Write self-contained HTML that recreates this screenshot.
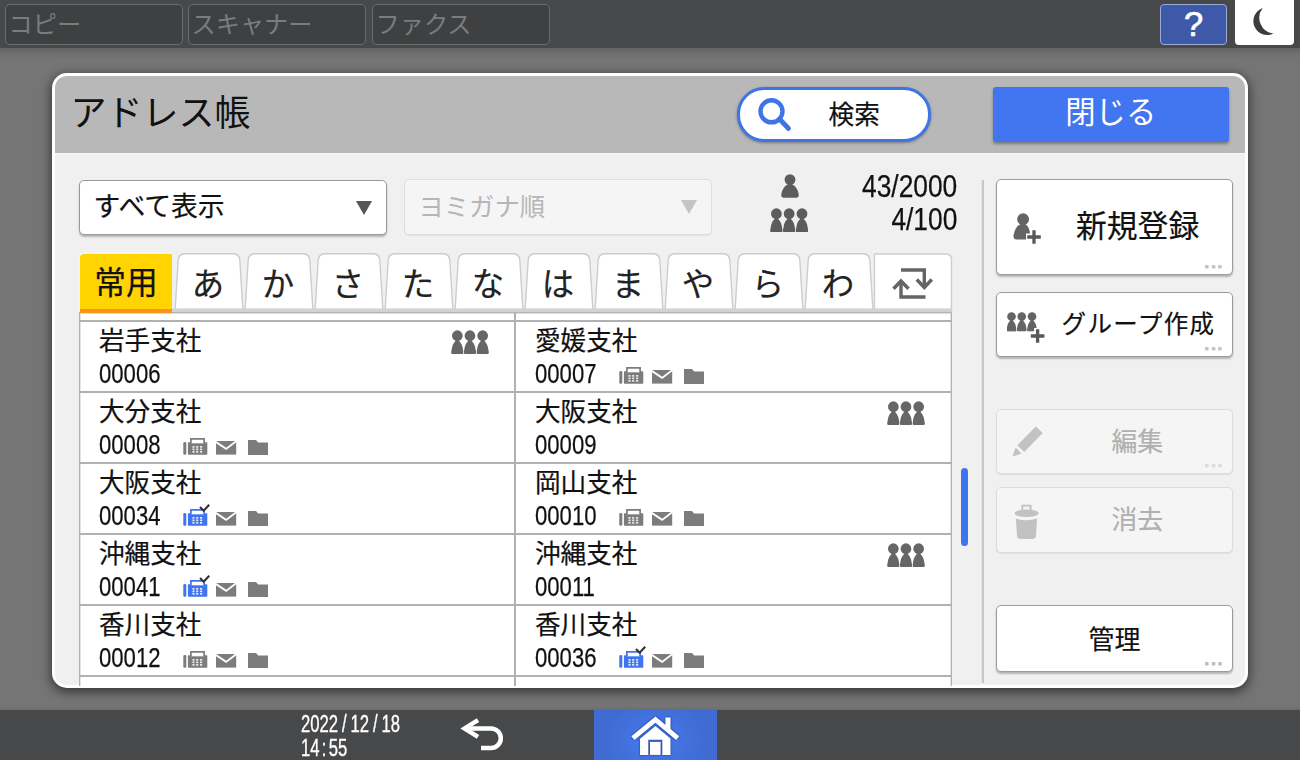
<!DOCTYPE html>
<html lang="ja">
<head>
<meta charset="utf-8">
<title>アドレス帳</title>
<style>
*{box-sizing:border-box;margin:0;padding:0}
html,body{width:1300px;height:760px;overflow:hidden}
body{position:relative;background:#757575;font-family:"Liberation Sans","Noto Sans CJK JP",sans-serif;color:#111}
.abs{position:absolute}
.nar{display:inline-block;transform-origin:0 50%;white-space:nowrap}
/* top bar */
#top{left:0;top:0;width:1300px;height:48px;background:#47484a}
#topsh{left:0;top:48px;width:1300px;height:12px;background:linear-gradient(#646464,#6f6f6f 45%,#757575)}
.tbtn{top:4px;height:41px;width:178px;border:1px solid #6b6c6e;border-radius:5px;background:#3f4042;color:#7b7c7e;font-size:24.2px;line-height:39px;padding-left:2.5px;white-space:nowrap}
#help{left:1160px;top:4px;width:67px;height:41px;background:#3d59a7;border:1.5px solid #9aabd8;border-radius:4px;color:#fff;font-size:34.5px;-webkit-text-stroke:.7px #fff;line-height:39px;text-align:center}
#moon{left:1235px;top:0;width:59px;height:45px;background:#fff;border-radius:0 0 4px 4px}
/* bottom bar */
#botsh{left:0;top:706px;width:1300px;height:4px;background:linear-gradient(#757575,#6c6c6c)}
#bot{left:0;top:710px;width:1300px;height:50px;background:#47484a}
#home{left:594px;top:710px;width:123px;height:50px;background:radial-gradient(ellipse 52px 40px at 50% 60%,#477bf0,#3f6bd2)}
.dt{left:301px;color:#fff;-webkit-text-stroke:.35px #fff;font-size:23px;line-height:24px;white-space:nowrap}
/* panel */
#panel{left:52px;top:73px;width:1196px;height:615px;background:#f0f0f0;border:3px solid #fff;border-radius:15px;box-shadow:0 3px 11px 1px rgba(0,0,0,.55);overflow:hidden}
#phead{left:0;top:0;width:1190px;height:77px;background:#b8b8b8;border-bottom:0;box-shadow:0 1.5px 0 #f6f6f6}
#title{left:70.5px;top:89.5px;font-size:36px;line-height:48px;color:#111;white-space:nowrap}
#search{left:737px;top:87px;width:194px;height:55px;border:3px solid #3f74e8;border-radius:27px;background:#fff;box-shadow:0 1px 3px rgba(0,0,0,.35)}
#search span{font-weight:400;-webkit-text-stroke:.2px #111;position:absolute;left:88.5px;top:6.5px;font-size:25.7px;line-height:36px;white-space:nowrap}
#close{left:992.5px;top:86.5px;width:236.5px;height:55px;background:#4275f0;border-radius:3px;box-shadow:0 2px 3px rgba(0,0,0,.35);color:#fff;font-size:30.3px;line-height:52px;text-align:center}
.dd{top:180px;width:308px;height:55px;border-radius:5px;font-weight:400;-webkit-text-stroke:.2px;font-size:26.8px;line-height:53px;padding-left:13.5px;white-space:nowrap}
#dd1{left:79px;background:#fff;border:1px solid #9a9a9a;box-shadow:0 2px 2px rgba(0,0,0,.25)}
#dd2{left:404px;top:179px;height:56px;background:#f5f5f5;border:1px solid #dedede;box-shadow:0 1px 1px rgba(0,0,0,.06);color:#b6b6b6;font-weight:400;-webkit-text-stroke:0;font-size:25.3px;line-height:54px}
.tri{position:absolute;right:14px;top:20px;width:0;height:0;border-left:8.5px solid transparent;border-right:8.5px solid transparent;border-top:14px solid #555}
#dd2 .tri{border-top-color:#c4c4c4}
.cnt{font-size:30.5px;-webkit-text-stroke:.25px #111;line-height:32px;color:#111;white-space:nowrap;right:342.4px;transform:scaleX(.864);transform-origin:100% 50%}
/* tabs */
.tabt{font-weight:400;-webkit-text-stroke:.2px #222;top:255px;width:68px;height:59px;font-size:32.4px;line-height:61px;text-align:center;color:#222}
#tab0{left:80px;top:254px;width:92px;height:59px;background:#ffd400;border-bottom:4px solid #f7941d;border-radius:4px 0 0 0;box-shadow:-1.5px -1.5px 0 #f6f4fb;font-weight:400;-webkit-text-stroke:.25px #111;font-size:31.7px;line-height:59px;text-indent:0;text-align:center;color:#111}
/* list */
#list{left:79px;top:312px;width:873px;height:374px;background:#fff;border:1px solid #b2b2b2;border-top:1px solid #adadad;border-bottom:none;box-shadow:inset 0 1px 0 #dedede,inset 1px 0 0 #e4e4e4,inset -1px 0 0 #e4e4e4}
.hl{left:80px;width:872px;height:2px;background:#b1b1b1}
#vl{left:514px;top:313px;width:2px;height:373px;background:#b1b1b1}
.nm{font-size:25.6px;font-weight:400;-webkit-text-stroke:.2px #111;line-height:32px;white-space:nowrap;color:#111}
.no{font-size:27.5px;-webkit-text-stroke:.25px #111;line-height:30px;white-space:nowrap;color:#111;transform:scaleX(.805);transform-origin:0 50%}
.ig{fill:#666}
#sb{left:961px;top:468px;width:7px;height:78px;border-radius:4px;background:#3f74f0}
#vsep{left:982px;top:180px;width:2px;height:503px;background:#c7c7c7;box-shadow:-.5px 0 0 #dcdcdc}
/* right buttons */
.rb{left:996px;width:237px;background:#fff;border:1px solid #9c9c9c;border-radius:5px;box-shadow:0 2px 2px rgba(0,0,0,.25);font-size:29px;white-space:nowrap;color:#111}
.rb.dis{background:#f5f5f5;border-color:#dcdcdc;box-shadow:0 1px 1px rgba(0,0,0,.08);color:#b0b0b0}
.rb span{position:absolute;white-space:nowrap;font-weight:400;-webkit-text-stroke:.2px}
.dots{position:absolute;right:9px;bottom:4.9px;width:18px;height:4px}
</style>
</head>
<body>
<div id="top" class="abs"></div>
<div id="topsh" class="abs"></div>
<div class="abs tbtn" style="left:5px">コピー</div>
<div class="abs tbtn" style="left:188px">スキャナー</div>
<div class="abs tbtn" style="left:372px">ファクス</div>
<div id="help" class="abs">?</div>
<div id="moon" class="abs"><svg width="57" height="44" viewBox="0 0 57 44"><path d="M27.7 8 A13.9 13.9 0 1 0 38.6 33.5 A15.84 15.84 0 0 1 27.7 8Z" fill="#3c3c3e"/></svg></div>

<div id="botsh" class="abs"></div>
<div id="bot" class="abs"></div>
<div id="home" class="abs"></div>

<div id="panel" class="abs"><div id="phead" class="abs"></div></div>
<div id="title" class="abs">アドレス帳</div>
<div id="search" class="abs"><span>検索</span></div>
<div id="close" class="abs">閉じる</div>

<div id="dd1" class="abs dd">すべて表示<i class="tri"></i></div>
<div id="dd2" class="abs dd">ヨミガナ順<i class="tri"></i></div>
<div class="abs cnt" style="top:169.5px">43/2000</div>
<div class="abs cnt" style="top:202.5px">4/100</div>

<div id="list" class="abs"></div>
<div id="vl" class="abs"></div>
<div id="sb" class="abs"></div>
<div id="vsep" class="abs"></div>
<!--GEN-->
<svg width="0" height="0" style="position:absolute">
<defs>
<symbol id="i-person" viewBox="0 0 18 24"><circle cx="9" cy="5.6" r="5.4"/><path d="M9 10 C4 10.5 1.2 15 0.3 20.5 Q0 23.8 3 23.8 H15 Q18 23.8 17.7 20.5 C16.8 15 14 10.5 9 10Z"/></symbol>
<symbol id="i-pawn" viewBox="0 0 12.8 24.6"><circle cx="6.4" cy="5.7" r="5.4"/><path d="M5 10 C3.8 12.6 1.9 13.4 1.2 17 L0.2 22.3 Q0 24.4 2 24.4 H10.8 Q12.8 24.4 12.6 22.3 L11.6 17 C10.9 13.4 9 12.6 7.8 10Z"/></symbol>
<symbol id="i-group" viewBox="0 0 38.4 24.6"><use href="#i-pawn" x="0" y="0" width="12.8" height="24.6"/><use href="#i-pawn" x="12.75" y="0" width="12.8" height="24.6"/><use href="#i-pawn" x="25.6" y="0" width="12.8" height="24.6"/></symbol>
<symbol id="i-fax" viewBox="0 0 25 17"><rect x="0.3" y="3.9" width="3" height="12.8" rx="1.3"/><rect x="4.9" y="4.3" width="19.4" height="12.4" rx="0.8"/><path d="M7.9 5.3 V0.9 H21.1 V5.3" fill="#fff" stroke="currentColor" stroke-width="1.7"/><g fill="#fff" opacity=".82"><rect x="9.4" y="8" width="2.2" height="1.7"/><rect x="13.1" y="8" width="2.2" height="1.7"/><rect x="17" y="8" width="2.2" height="1.7"/><rect x="9.4" y="10.5" width="2.2" height="1.7"/><rect x="13.1" y="10.5" width="2.2" height="1.7"/><rect x="17" y="10.5" width="2.2" height="1.7"/><rect x="9.4" y="13" width="2.2" height="1.7"/><rect x="13.1" y="13" width="2.2" height="1.7"/><rect x="17" y="13" width="2.2" height="1.7"/></g></symbol>
<symbol id="i-mail" viewBox="0 0 21 14"><rect x="0" y="0" width="20.2" height="13.6"/><path d="M-0.6 0.6 L10.15 7.9 L20.8 -0.2" fill="none" stroke="#fff" stroke-width="1.9"/></symbol>
<symbol id="i-folder" viewBox="0 0 20 15"><path d="M0 0 H8 L10.2 2.4 H20 V15 H0Z"/></symbol>
<symbol id="i-dots" viewBox="0 0 18 4"><rect x="0" y="0" width="3.6" height="3.6" rx="0.8"/><rect x="6.8" y="0" width="3.6" height="3.6" rx="0.8"/><rect x="13.1" y="0" width="3.6" height="3.6" rx="0.8"/></symbol>
</defs>
</svg>
<svg class="abs" style="left:0;top:0" width="1300" height="330" viewBox="0 0 1300 330">
<path d="M175 311.5 L178.2 260 Q178.8 253.8 185 253.8 H233 Q239.2 253.8 239.8 260 L243 311.5Z" fill="#fff" stroke="#cdcdcd" stroke-width="1.4"/>
<path d="M245 311.5 L248.2 260 Q248.8 253.8 255 253.8 H303 Q309.2 253.8 309.8 260 L313 311.5Z" fill="#fff" stroke="#cdcdcd" stroke-width="1.4"/>
<path d="M315 311.5 L318.2 260 Q318.8 253.8 325 253.8 H373 Q379.2 253.8 379.8 260 L383 311.5Z" fill="#fff" stroke="#cdcdcd" stroke-width="1.4"/>
<path d="M385 311.5 L388.2 260 Q388.8 253.8 395 253.8 H443 Q449.2 253.8 449.8 260 L453 311.5Z" fill="#fff" stroke="#cdcdcd" stroke-width="1.4"/>
<path d="M455 311.5 L458.2 260 Q458.8 253.8 465 253.8 H513 Q519.2 253.8 519.8 260 L523 311.5Z" fill="#fff" stroke="#cdcdcd" stroke-width="1.4"/>
<path d="M525 311.5 L528.2 260 Q528.8 253.8 535 253.8 H583 Q589.2 253.8 589.8 260 L593 311.5Z" fill="#fff" stroke="#cdcdcd" stroke-width="1.4"/>
<path d="M595 311.5 L598.2 260 Q598.8 253.8 605 253.8 H653 Q659.2 253.8 659.8 260 L663 311.5Z" fill="#fff" stroke="#cdcdcd" stroke-width="1.4"/>
<path d="M665 311.5 L668.2 260 Q668.8 253.8 675 253.8 H723 Q729.2 253.8 729.8 260 L733 311.5Z" fill="#fff" stroke="#cdcdcd" stroke-width="1.4"/>
<path d="M735 311.5 L738.2 260 Q738.8 253.8 745 253.8 H793 Q799.2 253.8 799.8 260 L803 311.5Z" fill="#fff" stroke="#cdcdcd" stroke-width="1.4"/>
<path d="M805 311.5 L808.2 260 Q808.8 253.8 815 253.8 H863 Q869.2 253.8 869.8 260 L873 311.5Z" fill="#fff" stroke="#cdcdcd" stroke-width="1.4"/>
<path d="M874.5 311.5 V254 H946 Q951.5 254 951.5 259.5 V311.5Z" fill="#fff" stroke="#cdcdcd" stroke-width="1.4"/>
<rect x="172" y="308.4" width="780" height="3.4" fill="#d3d3d3"/>
<g fill="none" stroke="#646464" stroke-width="3.4" stroke-linejoin="miter"><path d="M901 270 H924.3 V286"/><path d="M916.8 279.5 L924.3 287.5 L931.8 279.5"/><path d="M925.5 297 H901 V283"/><path d="M893.5 288.8 L901 281 L908.5 288.8"/></g>
</svg>
<div class="abs tabt" style="left:174px">あ</div>
<div class="abs tabt" style="left:244px">か</div>
<div class="abs tabt" style="left:314px">さ</div>
<div class="abs tabt" style="left:384px">た</div>
<div class="abs tabt" style="left:454px">な</div>
<div class="abs tabt" style="left:524px">は</div>
<div class="abs tabt" style="left:594px">ま</div>
<div class="abs tabt" style="left:664px">や</div>
<div class="abs tabt" style="left:734px">ら</div>
<div class="abs tabt" style="left:804px">わ</div>
<div id="tab0" class="abs">常用</div>
<div class="abs hl" style="top:320px"></div>
<div class="abs hl" style="top:391px"></div>
<div class="abs hl" style="top:462px"></div>
<div class="abs hl" style="top:533px"></div>
<div class="abs hl" style="top:604px"></div>
<div class="abs hl" style="top:675px"></div>
<div class="abs nm" style="left:99px;top:325px">岩手支社</div>
<div class="abs no" style="left:99.4px;top:358.6px">00006</div>
<svg class="abs ig" style="left:450.6px;top:329.6px" width="38" height="24.4"><use href="#i-group"/></svg>
<div class="abs nm" style="left:99px;top:396px">大分支社</div>
<div class="abs no" style="left:99.4px;top:429.6px">00008</div>
<svg class="abs" style="left:182.5px;top:438px;color:#7c7c7c;fill:#7c7c7c" width="25" height="17"><use href="#i-fax"/></svg>
<svg class="abs" style="left:215.8px;top:441px;fill:#7c7c7c" width="21" height="14"><use href="#i-mail"/></svg>
<svg class="abs" style="left:248px;top:439.8px;fill:#7c7c7c" width="20" height="15"><use href="#i-folder"/></svg>
<div class="abs nm" style="left:99px;top:467px">大阪支社</div>
<div class="abs no" style="left:99.4px;top:500.6px">00034</div>
<svg class="abs" style="left:182.5px;top:509px;color:#3f74f0;fill:#3f74f0" width="25" height="17"><use href="#i-fax"/></svg>
<svg class="abs" style="left:198px;top:502px" width="14" height="10" viewBox="0 0 14 10"><path d="M2 5 L5.7 8.7 L11.2 2.7" fill="none" stroke="#333" stroke-width="2.1"/></svg>
<svg class="abs" style="left:215.8px;top:512px;fill:#7c7c7c" width="21" height="14"><use href="#i-mail"/></svg>
<svg class="abs" style="left:248px;top:510.8px;fill:#7c7c7c" width="20" height="15"><use href="#i-folder"/></svg>
<div class="abs nm" style="left:99px;top:538px">沖縄支社</div>
<div class="abs no" style="left:99.4px;top:571.6px">00041</div>
<svg class="abs" style="left:182.5px;top:580px;color:#3f74f0;fill:#3f74f0" width="25" height="17"><use href="#i-fax"/></svg>
<svg class="abs" style="left:198px;top:573px" width="14" height="10" viewBox="0 0 14 10"><path d="M2 5 L5.7 8.7 L11.2 2.7" fill="none" stroke="#333" stroke-width="2.1"/></svg>
<svg class="abs" style="left:215.8px;top:583px;fill:#7c7c7c" width="21" height="14"><use href="#i-mail"/></svg>
<svg class="abs" style="left:248px;top:581.8px;fill:#7c7c7c" width="20" height="15"><use href="#i-folder"/></svg>
<div class="abs nm" style="left:99px;top:609px">香川支社</div>
<div class="abs no" style="left:99.4px;top:642.6px">00012</div>
<svg class="abs" style="left:182.5px;top:651px;color:#7c7c7c;fill:#7c7c7c" width="25" height="17"><use href="#i-fax"/></svg>
<svg class="abs" style="left:215.8px;top:654px;fill:#7c7c7c" width="21" height="14"><use href="#i-mail"/></svg>
<svg class="abs" style="left:248px;top:652.8px;fill:#7c7c7c" width="20" height="15"><use href="#i-folder"/></svg>
<div class="abs nm" style="left:535px;top:325px">愛媛支社</div>
<div class="abs no" style="left:535.4px;top:358.6px">00007</div>
<svg class="abs" style="left:618.5px;top:367px;color:#7c7c7c;fill:#7c7c7c" width="25" height="17"><use href="#i-fax"/></svg>
<svg class="abs" style="left:651.8px;top:370px;fill:#7c7c7c" width="21" height="14"><use href="#i-mail"/></svg>
<svg class="abs" style="left:684px;top:368.8px;fill:#7c7c7c" width="20" height="15"><use href="#i-folder"/></svg>
<div class="abs nm" style="left:535px;top:396px">大阪支社</div>
<div class="abs no" style="left:535.4px;top:429.6px">00009</div>
<svg class="abs ig" style="left:886.6px;top:400.6px" width="38" height="24.4"><use href="#i-group"/></svg>
<div class="abs nm" style="left:535px;top:467px">岡山支社</div>
<div class="abs no" style="left:535.4px;top:500.6px">00010</div>
<svg class="abs" style="left:618.5px;top:509px;color:#7c7c7c;fill:#7c7c7c" width="25" height="17"><use href="#i-fax"/></svg>
<svg class="abs" style="left:651.8px;top:512px;fill:#7c7c7c" width="21" height="14"><use href="#i-mail"/></svg>
<svg class="abs" style="left:684px;top:510.8px;fill:#7c7c7c" width="20" height="15"><use href="#i-folder"/></svg>
<div class="abs nm" style="left:535px;top:538px">沖縄支社</div>
<div class="abs no" style="left:535.4px;top:571.6px">00011</div>
<svg class="abs ig" style="left:886.6px;top:542.6px" width="38" height="24.4"><use href="#i-group"/></svg>
<div class="abs nm" style="left:535px;top:609px">香川支社</div>
<div class="abs no" style="left:535.4px;top:642.6px">00036</div>
<svg class="abs" style="left:618.5px;top:651px;color:#3f74f0;fill:#3f74f0" width="25" height="17"><use href="#i-fax"/></svg>
<svg class="abs" style="left:634px;top:644px" width="14" height="10" viewBox="0 0 14 10"><path d="M2 5 L5.7 8.7 L11.2 2.7" fill="none" stroke="#333" stroke-width="2.1"/></svg>
<svg class="abs" style="left:651.8px;top:654px;fill:#7c7c7c" width="21" height="14"><use href="#i-mail"/></svg>
<svg class="abs" style="left:684px;top:652.8px;fill:#7c7c7c" width="20" height="15"><use href="#i-folder"/></svg>

<div class="abs rb" style="top:179px;height:96px"><svg class="abs" style="left:16px;top:32px;fill:#646464" width="32" height="34" viewBox="0 0 32 34"><circle cx="10.1" cy="7.2" r="5.9"/><path d="M10 11.5 C5 12 2 16 0.6 23 Q0 27.4 3.6 27.4 H14 Q17.6 27.4 17.4 23.6 C16.6 16.5 14.6 12 10 11.5Z"/><path d="M21 17 V33 M13 25 H29" stroke="#fff" stroke-width="7" fill="none"/><path d="M21 18.2 V31.8 M14.2 25 H27.8" stroke="#585858" stroke-width="3.3" fill="none"/></svg><span style="left:79px;top:28px;font-size:30.8px;line-height:38px">新規登録</span><svg class="dots" style="fill:#c4c4c4"><use href="#i-dots"/></svg></div>
<div class="abs rb" style="top:291.5px;height:65.5px"><svg class="abs" style="left:10px;top:19.5px;fill:#646464" width="40" height="34" viewBox="0 0 40 34"><g transform="translate(-0.6 0) scale(0.8 0.8)"><use href="#i-group" width="38.4" height="24.6"/></g><path d="M30.6 16 V32 M22.6 24 H38.6" stroke="#fff" stroke-width="7" fill="none"/><path d="M30.6 17.2 V30.8 M23.8 24 H37.4" stroke="#585858" stroke-width="3.3" fill="none"/></svg><span style="left:64.5px;top:14px;font-size:24.5px;letter-spacing:1.4px;line-height:36px">グループ作成</span><svg class="dots" style="fill:#c4c4c4"><use href="#i-dots"/></svg></div>
<div class="abs rb dis" style="top:408.5px;height:65.5px"><svg class="abs" style="left:15px;top:16px;fill:#c2c2c2" width="33" height="33" viewBox="0 0 33 33"><path d="M23.8 0.4 L30.7 6.9 L12.2 26 L5.4 19.2Z"/><path d="M3.6 21.6 L9.6 27.6 L0.4 30.6Z"/></svg><span style="left:114.5px;top:14px;font-size:25.8px;line-height:36px">編集</span><svg class="dots" style="fill:#dcdcdc"><use href="#i-dots"/></svg></div>
<div class="abs rb dis" style="top:487px;height:65.5px"><svg class="abs" style="left:17px;top:16px;fill:#c2c2c2" width="26" height="36" viewBox="0 0 26 36"><path d="M8.3 6.5 V1.6 H16.6 V6.5" fill="none" stroke="#c2c2c2" stroke-width="1.9"/><ellipse cx="12.5" cy="9.3" rx="12" ry="3.8"/><path d="M1.9 14.6 Q12.5 18 23.1 14.6 L22 32 Q21.6 35 18 35 H7 Q3.4 35 3 32Z"/></svg><span style="left:114.5px;top:14px;font-size:25.8px;line-height:36px">消去</span></div>
<div class="abs rb" style="top:605px;height:66.5px"><span style="left:91.5px;top:15.5px;font-size:26px;line-height:36px">管理</span><svg class="dots" style="fill:#bdbdbd"><use href="#i-dots"/></svg></div>

<svg class="abs" style="left:780.5px;top:174px;fill:#5c5c5c" width="18" height="24"><use href="#i-person"/></svg>
<svg class="abs" style="left:770.4px;top:207.8px;fill:#5c5c5c" width="38.4" height="24.6"><use href="#i-group"/></svg>
<svg class="abs" style="left:752px;top:92px" width="44" height="44" viewBox="0 0 44 44"><circle cx="19.5" cy="19.3" r="11" fill="none" stroke="#3f74e8" stroke-width="4.4"/><path d="M27.5 27 L36.5 36.5" stroke="#3f74e8" stroke-width="4.8" stroke-linecap="round"/></svg>
<div class="abs dt" style="top:711.5px"><span class="nar" style="transform:scaleX(.725);word-spacing:-1px">2022 / 12 / 18</span></div>
<div class="abs dt" style="top:736px"><span class="nar" style="transform:scaleX(.725);word-spacing:-3.3px">14 : 55</span></div>
<svg class="abs" style="left:456px;top:712px" width="52" height="44" viewBox="0 0 52 44"><path d="M22 8.2 L8.6 16.4 L22 24.8" fill="none" stroke="#fff" stroke-width="4.5" stroke-linejoin="miter"/><path d="M9.5 16.4 H35 A9.8 9.8 0 0 1 35 36 H25" fill="none" stroke="#fff" stroke-width="4.5"/></svg>
<svg class="abs" style="left:626px;top:712px;filter:drop-shadow(0 0 .8px rgba(20,45,130,.95))" width="60" height="46" viewBox="0 0 60 46"><path d="M39.4 5.6 H44.5 V20 L39.4 15Z" fill="#fff"/><path d="M6.9 26.1 L29.45 7.6 L51.7 26.1" fill="none" stroke="#fff" stroke-width="4.8"/><path d="M14.05 42.9 V26.7 L29.45 14.1 L44.5 26.5 V42.9 H36.3 V27.8 H22.3 V42.9Z" fill="#fff"/><rect x="24" y="29.9" width="10.6" height="13" fill="#fff"/></svg>
<!--/GEN-->
</body>
</html>
